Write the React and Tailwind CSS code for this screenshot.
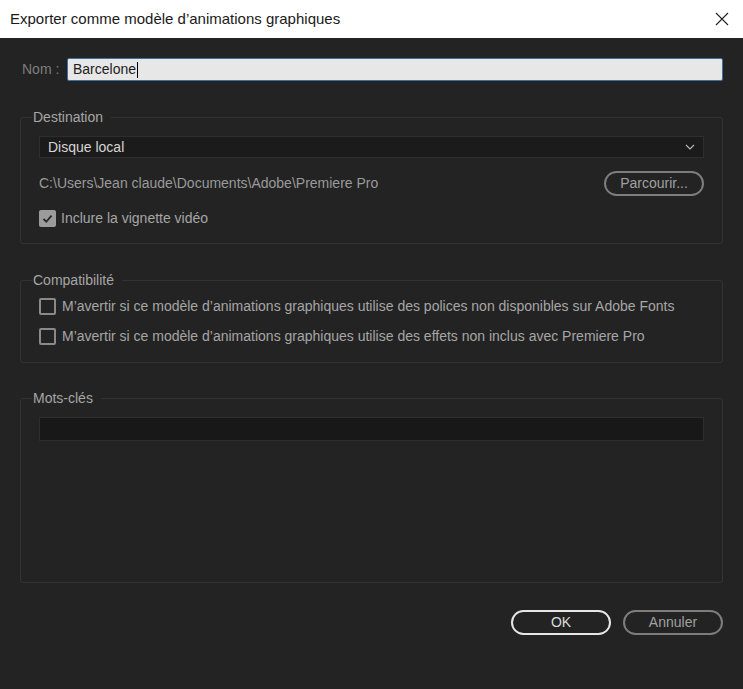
import React from 'react';

// --- SMALL PIECES ---

const Checkbox = ({ checked = false }) => (
  <span
    className={`flex h-[17px] w-[17px] shrink-0 items-center justify-center rounded-[2px] ${
      checked ? 'bg-[#9b9b9b]' : 'border-2 border-[#8a8a8a]'
    }`}
  >
    {checked && (
      <svg viewBox="0 0 16 16" className="h-[13px] w-[13px]">
        <path d="M3 8.5 L6.5 12 L13 4.5" fill="none" stroke="#262626" strokeWidth="2.2" />
      </svg>
    )}
  </span>
);

const Group = ({ title, className = '', children }) => (
  <fieldset className={`rounded-[3px] border border-[#333333] px-[18px] ${className}`}>
    <legend className="ml-[-7px] pl-[1px] pr-[8px] text-[14px] leading-[20px] text-[#a6a6a6]">{title}</legend>
    {children}
  </fieldset>
);

const PillButton = ({ children, tone = 'gray', className = '' }) => (
  <button
    className={`flex h-[25px] w-[100px] items-center justify-center rounded-full border-2 text-[14px] ${
      tone === 'white' ? 'border-[#e6e6e6] text-[#dcdcdc]' : 'border-[#7d7d7d] text-[#a0a0a0]'
    } ${className}`}
  >
    {children}
  </button>
);

// --- MAIN ---

export default function App() {
  return (
    <div
      className="flex h-[689px] w-[743px] flex-col bg-[#232323]"
      style={{ fontFamily: '"Liberation Sans", Arial, sans-serif' }}
    >
      {/* Title bar */}
      <div className="flex h-[38px] shrink-0 items-center justify-between bg-white pl-[10px] pr-[14px]">
        <span className="text-[15px] text-[#1a1a1a]">Exporter comme modèle d’animations graphiques</span>
        <svg viewBox="0 0 14 14" className="h-[14px] w-[14px]">
          <path d="M1 1 L13 13 M13 1 L1 13" stroke="#222" strokeWidth="1.1" />
        </svg>
      </div>

      <div className="flex flex-1 flex-col px-[20px]">
        {/* Name */}
        <div className="mt-[20px] flex items-center">
          <span className="ml-[2px] w-[45px] text-[14px] text-[#7e7e7e]">Nom :</span>
          <div className="flex h-[23px] flex-1 items-center rounded-[2px] border border-[#3f6fa3] bg-[#e7e7e7] pl-[5px] text-[14px] text-[#1c1c1c]">
            Barcelone
            <span className="ml-[1px] h-[16px] w-[1px] bg-black" />
          </div>
        </div>

        {/* Destination */}
        <Group title="Destination" className="mt-[26px] pb-[16px] pt-[9px]">
          <div className="flex h-[22px] items-center justify-between border border-[#2e2e2e] bg-[#1b1b1b] pl-[8px] pr-[8px] text-[14px] text-[#d6d6d6]">
            Disque local
            <svg viewBox="0 0 10 6" className="h-[6px] w-[10px]">
              <path d="M1 1 L5 5 L9 1" fill="none" stroke="#bbbbbb" strokeWidth="1.1" />
            </svg>
          </div>
          <div className="mt-[13px] flex items-center justify-between">
            <span className="text-[14px] text-[#9a9a9a]">C:\Users\Jean claude\Documents\Adobe\Premiere Pro</span>
            <PillButton>Parcourir...</PillButton>
          </div>
          <label className="mt-[13px] flex h-[18px] items-center gap-[5px] text-[14px] text-[#a6a6a6]">
            <Checkbox checked />
            Inclure la vignette vidéo
          </label>
        </Group>

        {/* Compatibility */}
        <Group title="Compatibilité" className="mt-[26px] pb-[16px] pt-[6px]">
          <div className="flex flex-col gap-[10px] text-[14px] text-[#a6a6a6]">
            <label className="flex h-[20px] items-center gap-[6px]">
              <Checkbox />
              M’avertir si ce modèle d’animations graphiques utilise des polices non disponibles sur Adobe Fonts
            </label>
            <label className="flex h-[20px] items-center gap-[6px]">
              <Checkbox />
              M’avertir si ce modèle d’animations graphiques utilise des effets non inclus avec Premiere Pro
            </label>
          </div>
        </Group>

        {/* Keywords */}
        <Group title="Mots-clés" className="mt-[25px] h-[195px] pt-[9px]">
          <div className="h-[24px] border border-[#2e2e2e] bg-[#181818]" />
        </Group>

        {/* Footer buttons */}
        <div className="mt-[27px] flex justify-end gap-[12px]">
          <PillButton tone="white">OK</PillButton>
          <PillButton>Annuler</PillButton>
        </div>
      </div>
    </div>
  );
}
